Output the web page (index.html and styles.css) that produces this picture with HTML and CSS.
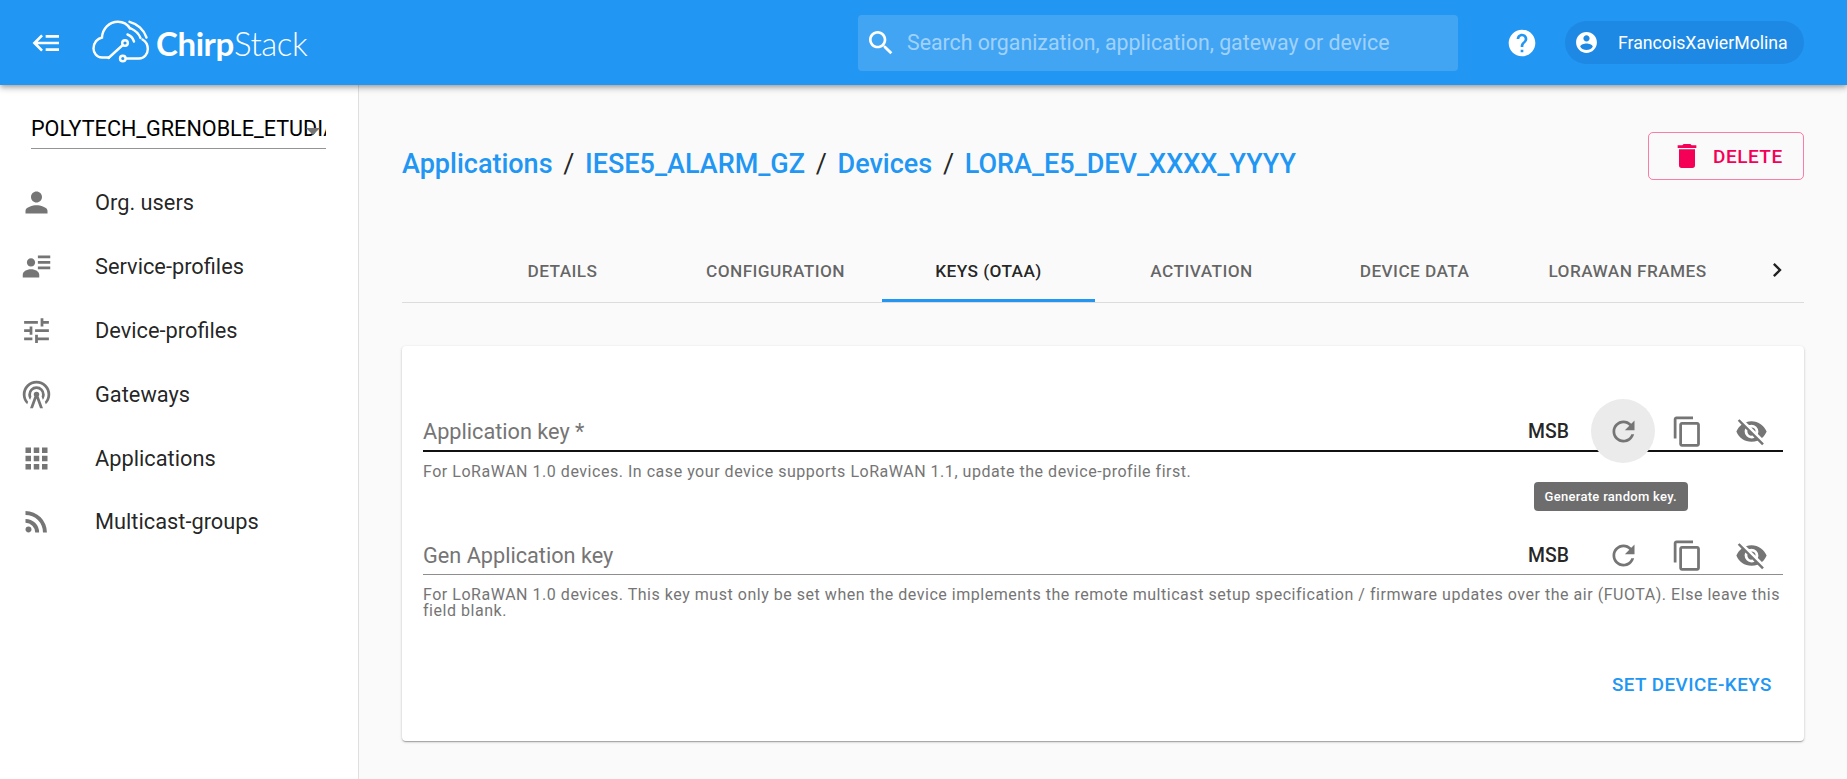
FILE: index.html
```html
<html>
  <head>
    <meta charset="UTF-8" />
    <title>ChirpStack</title>
    <link rel="stylesheet" href="styles.css">
  </head>
  <body>
    <div id="header">
      <svg class="menuIcon" viewBox="0 0 24 24"><path d="M5,13L9,17L7.6,18.42L1.18,12L7.6,5.58L9,7L5,11H21V13H5M21,6V8H11V6H21M21,16V18H11V16H21Z"/></svg>
      <div class="logo">
        <svg class="logoCloud" viewBox="92 17 57 45">
          <path d="M109 54.500H102C96.500 54.500 93.500 49.500 93.500 45.500C93.500 39.500 97.500 35.500 102 34.500C102.500 26 109 18.800 118 18.800C123 18.800 127.500 21.500 130 25.500"/>
          <path d="M126 55.500H139C144.500 55.500 147.800 50.500 147.800 46C147.800 42 146 38.500 142.500 36.500"/>
          <path d="M108.500 55L122.800 42"/>
          <circle cx="125" cy="40" r="2.800"/>
          <circle cx="122.800" cy="55.500" r="2.800"/>
          <path d="M127.500 31.500C130.500 32.500 133 35.500 134 38.500"/>
          <path d="M131 25.500C135.500 27.500 139 31 140.500 35"/>
          <path d="M129.500 18.800C137 20.500 144 27 146.500 34.500"/>
        </svg>
        <span class="logoText"><b>Chirp</b>Stack</span>
      </div>
      <div class="search">
        <svg class="searchIcon" viewBox="0 0 24 24"><path d="M15.5 14h-.79l-.28-.27C15.41 12.59 16 11.11 16 9.5 16 5.91 13.09 3 9.5 3S3 5.91 3 9.5 5.91 16 9.5 16c1.61 0 3.09-.59 4.23-1.57l.27.28v.79l5 4.99L20.49 19l-4.99-5zm-6 0C7.01 14 5 11.99 5 9.5S7.01 5 9.5 5 14 7.01 14 9.5 11.99 14 9.5 14z"/></svg>
        <span>Search organization, application, gateway or device</span>
      </div>
      <svg class="helpIcon" viewBox="0 0 24 24"><path d="M12 2C6.48 2 2 6.48 2 12s4.48 10 10 10 10-4.48 10-10S17.52 2 12 2zm1 17h-2v-2h2v2zm2.070-7.750l-.9.92C13.450 12.900 13 13.500 13 15h-2v-.5c0-1.100.45-2.100 1.170-2.830l1.240-1.260c.37-.36.59-.86.59-1.410 0-1.100-.9-2-2-2s-2 .9-2 2H8c0-2.210 1.790-4 4-4s4 1.790 4 4c0 .88-.36 1.680-.93 2.250z"/></svg>
      <div class="userChip">
        <svg viewBox="0 0 24 24"><path d="M12 2C6.48 2 2 6.48 2 12s4.48 10 10 10 10-4.48 10-10S17.52 2 12 2zm0 3c1.660 0 3 1.340 3 3s-1.340 3-3 3-3-1.340-3-3 1.340-3 3-3zm0 14.200c-2.500 0-4.710-1.280-6-3.220.03-1.990 4-3.080 6-3.080 1.990 0 5.970 1.090 6 3.080-1.290 1.940-3.500 3.220-6 3.220z"/></svg>
        <span>FrancoisXavierMolina</span>
      </div>
    </div>

    <div id="page">
      <div id="sidebar">
        <div class="orgSelect">
          <span class="orgName">POLYTECH_GRENOBLE_ETUDIANTS</span>
          <span class="orgArrow"></span>
        </div>
        <div class="navItem">
          <svg viewBox="0 0 24 24"><path d="M12 12c2.210 0 4-1.790 4-4s-1.790-4-4-4-4 1.790-4 4 1.790 4 4 4zm0 2c-2.670 0-8 1.340-8 4v2h16v-2c0-2.660-5.330-4-8-4z"/></svg>
          <span>Org. users</span>
        </div>
        <div class="navItem">
          <svg viewBox="0 0 24 24"><path d="M11,9C11,10.660 9.660,12 8,12C6.340,12 5,10.660 5,9C5,7.340 6.340,6 8,6C9.660,6 11,7.340 11,9M14,20H2V18C2,15.790 4.690,14 8,14C11.310,14 14,15.790 14,18M22,12V14H13V12M22,8V10H13V8M22,4V6H13V4Z"/></svg>
          <span>Service-profiles</span>
        </div>
        <div class="navItem">
          <svg viewBox="0 0 24 24"><path d="M3 17v2h6v-2H3zM3 5v2h10V5H3zm10 16v-2h8v-2h-8v-2h-2v6h2zM7 9v2H3v2h4v2h2V9H7zm14 4v-2H11v2h10zm-6-4h2V7h4V5h-4V3h-2v6z"/></svg>
          <span>Device-profiles</span>
        </div>
        <div class="navItem">
          <svg viewBox="0 0 24 24"><path d="M12,10A2,2 0 0,1 14,12C14,12.500 13.820,12.940 13.530,13.290L16.700,22H14.570L12,14.930L9.430,22H7.300L10.470,13.290C10.180,12.940 10,12.500 10,12A2,2 0 0,1 12,10M12,8A4,4 0 0,0 8,12C8,12.500 8.100,13 8.280,13.460L7.400,15.860C6.530,14.810 6,13.470 6,12A6,6 0 0,1 12,6A6,6 0 0,1 18,12C18,13.470 17.470,14.810 16.600,15.860L15.720,13.460C15.900,13 16,12.500 16,12A4,4 0 0,0 12,8M12,4A8,8 0 0,0 4,12C4,14 4.730,15.820 5.940,17.220L5.230,19.170C3.250,17.340 2,14.820 2,12A10,10 0 0,1 12,2A10,10 0 0,1 22,12C22,14.820 20.750,17.340 18.770,19.170L18.060,17.220C19.270,15.820 20,14 20,12A8,8 0 0,0 12,4Z"/></svg>
          <span>Gateways</span>
        </div>
        <div class="navItem">
          <svg viewBox="0 0 24 24"><path d="M4 8h4V4H4v4zm6 12h4v-4h-4v4zm-6 0h4v-4H4v4zm0-6h4v-4H4v4zm6 0h4v-4h-4v4zm6-10v4h4V4h-4zm-6 4h4V4h-4v4zm6 6h4v-4h-4v4zm0 6h4v-4h-4v4z"/></svg>
          <span>Applications</span>
        </div>
        <div class="navItem">
          <svg viewBox="0 0 24 24"><path d="M6.180,15.640A2.180,2.180 0 0,1 8.360,17.820C8.360,19 7.380,20 6.180,20C5,20 4,19 4,17.820A2.180,2.180 0 0,1 6.180,15.640M4,4.440A15.560,15.560 0 0,1 19.560,20H16.730A12.730,12.730 0 0,0 4,7.270V4.440M4,10.100A9.900,9.900 0 0,1 13.900,20H11.070A7.070,7.070 0 0,0 4,12.930V10.100Z"/></svg>
          <span>Multicast-groups</span>
        </div>
      </div>

      <div id="main">
        <div class="titleRow">
          <div class="breadcrumb">
            <a>Applications</a><i>/</i><a>IESE5_ALARM_GZ</a><i>/</i><a>Devices</a><i>/</i><a>LORA_E5_DEV_XXXX_YYYY</a>
          </div>
          <div class="deleteBtn">
            <svg viewBox="0 0 24 24"><path d="M19,4H15.500L14.500,3H9.500L8.500,4H5V6H19M6,19A2,2 0 0,0 8,21H16A2,2 0 0,0 18,19V7H6V19Z"/></svg>
            <span>DELETE</span>
          </div>
        </div>

        <div class="tabs">
          <div class="tab">DETAILS</div>
          <div class="tab">CONFIGURATION</div>
          <div class="tab active">KEYS (OTAA)</div>
          <div class="tab">ACTIVATION</div>
          <div class="tab">DEVICE DATA</div>
          <div class="tab">LORAWAN FRAMES</div>
          <div class="tabNext">
            <svg viewBox="0 0 24 24"><path d="M10 6L8.590 7.410 13.170 12l-4.580 4.590L10 18l6-6z"/></svg>
          </div>
        </div>

        <div class="card">
          <div class="field first">
            <div class="inputRow focused">
              <span class="label">Application key *</span>
              <span class="msb">MSB</span>
              <div class="iconBtn hovered">
                <svg viewBox="0 0 24 24"><path d="M17.650 6.350C16.200 4.900 14.210 4 12 4c-4.420 0-7.990 3.580-7.990 8s3.570 8 7.990 8c3.730 0 6.840-2.550 7.730-6h-2.080c-.82 2.330-3.040 4-5.650 4-3.310 0-6-2.690-6-6s2.690-6 6-6c1.660 0 3.140.69 4.220 1.780L13 11h7V4l-2.350 2.350z"/></svg>
              </div>
              <div class="iconBtn">
                <svg viewBox="0 0 24 24"><path d="M16 1H4c-1.100 0-2 .9-2 2v14h2V3h12V1zm3 4H8c-1.100 0-2 .9-2 2v14c0 1.100.9 2 2 2h11c1.100 0 2-.9 2-2V7c0-1.100-.9-2-2-2zm0 16H8V7h11v14z"/></svg>
              </div>
              <div class="iconBtn">
                <svg viewBox="0 0 24 24"><path d="M11.830,9L15,12.160C15,12.110 15,12.050 15,12A3,3 0 0,0 12,9C11.940,9 11.890,9 11.830,9M7.530,9.800L9.080,11.350C9.030,11.560 9,11.770 9,12A3,3 0 0,0 12,15C12.220,15 12.440,14.970 12.650,14.920L14.200,16.470C13.530,16.800 12.790,17 12,17A5,5 0 0,1 7,12C7,11.210 7.200,10.470 7.530,9.800M2,4.270L4.280,6.550L4.730,7C3.080,8.300 1.780,10 1,12C2.730,16.390 7,19.500 12,19.500C13.550,19.500 15.030,19.200 16.380,18.660L16.810,19.080L19.730,22L21,20.730L3.270,3M12,7A5,5 0 0,1 17,12C17,12.640 16.870,13.260 16.640,13.820L19.570,16.750C21.070,15.500 22.270,13.860 23,12C21.270,7.610 17,4.500 12,4.500C10.600,4.500 9.260,4.750 8,5.200L10.170,7.350C10.740,7.130 11.350,7 12,7Z"/></svg>
              </div>
            </div>
            <div class="helper">For LoRaWAN 1.0 devices. In case your device supports LoRaWAN 1.1, update the device-profile first.</div>
            <div class="tooltip">Generate random key.</div>
          </div>

          <div class="field">
            <div class="inputRow">
              <span class="label">Gen Application key</span>
              <span class="msb">MSB</span>
              <div class="iconBtn">
                <svg viewBox="0 0 24 24"><path d="M17.650 6.350C16.200 4.900 14.210 4 12 4c-4.420 0-7.990 3.580-7.990 8s3.570 8 7.990 8c3.730 0 6.840-2.550 7.730-6h-2.080c-.82 2.330-3.040 4-5.650 4-3.310 0-6-2.690-6-6s2.690-6 6-6c1.660 0 3.140.69 4.220 1.780L13 11h7V4l-2.350 2.350z"/></svg>
              </div>
              <div class="iconBtn">
                <svg viewBox="0 0 24 24"><path d="M16 1H4c-1.100 0-2 .9-2 2v14h2V3h12V1zm3 4H8c-1.100 0-2 .9-2 2v14c0 1.100.9 2 2 2h11c1.100 0 2-.9 2-2V7c0-1.100-.9-2-2-2zm0 16H8V7h11v14z"/></svg>
              </div>
              <div class="iconBtn">
                <svg viewBox="0 0 24 24"><path d="M11.830,9L15,12.160C15,12.110 15,12.050 15,12A3,3 0 0,0 12,9C11.940,9 11.890,9 11.830,9M7.530,9.800L9.080,11.350C9.030,11.560 9,11.770 9,12A3,3 0 0,0 12,15C12.220,15 12.440,14.970 12.650,14.920L14.200,16.470C13.530,16.800 12.790,17 12,17A5,5 0 0,1 7,12C7,11.210 7.200,10.470 7.530,9.800M2,4.270L4.280,6.550L4.730,7C3.080,8.300 1.780,10 1,12C2.730,16.390 7,19.500 12,19.500C13.550,19.500 15.030,19.200 16.380,18.660L16.810,19.080L19.730,22L21,20.730L3.270,3M12,7A5,5 0 0,1 17,12C17,12.640 16.870,13.260 16.640,13.820L19.570,16.750C21.070,15.500 22.270,13.860 23,12C21.270,7.610 17,4.500 12,4.500C10.600,4.500 9.260,4.750 8,5.200L10.170,7.350C10.740,7.130 11.350,7 12,7Z"/></svg>
              </div>
            </div>
            <div class="helper">For LoRaWAN 1.0 devices. This key must only be set when the device implements the remote multicast setup specification / firmware updates over the air (FUOTA). Else leave this field blank.</div>
          </div>

          <div class="cardActions">
            <div class="submitBtn">SET DEVICE-KEYS</div>
          </div>
        </div>
      </div>
    </div>
  </body>
</html>
```

FILE: styles.css
```css
body, html {
  margin: 0;
  padding: 0;
  height: 100%;
  overflow: hidden;
  font-family: Roboto, sans-serif;
  background: #fafafa;
}

svg {
  display: block;
  flex: none;
  fill: currentColor;
}

#header {
  position: relative;
  z-index: 2;
  height: 85px;
  background: #2196f3;
  color: #fff;
  display: flex;
  align-items: center;
  box-shadow: 0 2px 4px -1px rgba(0,0,0,.2), 0 4px 5px 0 rgba(0,0,0,.14), 0 1px 10px 0 rgba(0,0,0,.12);
}

.menuIcon {
  width: 32px;
  height: 32px;
  margin-left: 31px;
}

.logo {
  display: flex;
  align-items: center;
  margin-left: 29px;
  width: 766px;
}

.logoCloud {
  width: 57px;
  height: 45px;
  fill: none;
  stroke: #fff;
  stroke-width: 2.4;
  stroke-linecap: round;
}

.logoText {
  margin-left: 7px;
  font-family: Lato, sans-serif;
  font-size: 33px;
  font-weight: 300;
  letter-spacing: -.4px;
}

.logoText b {
  font-weight: 700;
}

.search {
  width: 600px;
  height: 56px;
  background: rgba(255,255,255,.15);
  border-radius: 4px;
  display: flex;
  align-items: center;
  color: rgba(255,255,255,.5);
  font-size: 21.3px;
}

.searchIcon {
  width: 32px;
  height: 32px;
  margin-left: 7px;
  margin-right: 10px;
  color: #fff;
}

.helpIcon {
  width: 32px;
  height: 32px;
  margin-left: 48px;
}

.userChip {
  width: 239px;
  height: 43px;
  margin-left: 27px;
  border-radius: 22px;
  background: #1e88e5;
  display: flex;
  align-items: center;
  font-size: 17.7px;
}

.userChip svg {
  width: 25px;
  height: 25px;
  margin-left: 9px;
  margin-right: 19px;
}

#page {
  display: flex;
  height: 694px;
}

#sidebar {
  width: 358px;
  background: #fff;
  border-right: 1px solid #e0e0e0;
  padding-top: 15px;
  box-sizing: content-box;
}

.orgSelect {
  position: relative;
  width: 295px;
  height: 48px;
  margin-left: 31px;
  margin-bottom: 22px;
  border-bottom: 1px solid #949494;
  overflow: hidden;
}

.orgName {
  display: block;
  line-height: 58px;
  font-size: 21.6px;
  color: #000;
  white-space: nowrap;
}

.orgArrow {
  position: absolute;
  right: 6px;
  top: 28px;
  border-left: 7px solid transparent;
  border-right: 7px solid transparent;
  border-top: 7px solid #757575;
}

.navItem {
  height: 63.8px;
  display: flex;
  align-items: center;
  padding-left: 20px;
  font-size: 21.8px;
  color: rgba(0,0,0,.87);
}

.navItem svg {
  width: 33px;
  height: 33px;
  margin-right: 42px;
  color: #757575;
}

#main {
  flex: 1;
  padding: 0 43px;
}

.titleRow {
  height: 132px;
  padding-top: 47px;
  box-sizing: border-box;
  display: flex;
  justify-content: space-between;
  align-items: flex-start;
}

.breadcrumb {
  padding-top: 16px;
  font-size: 27px;
  font-weight: 500;
  color: #2196f3;
  line-height: 32px;
}

.breadcrumb i {
  font-style: normal;
  font-weight: 400;
  color: rgba(0,0,0,.87);
  margin: 0 10.7px;
}

.deleteBtn {
  width: 156px;
  height: 48px;
  box-sizing: border-box;
  border: 1px solid rgba(245,0,87,.5);
  border-radius: 5px;
  color: #f50057;
  display: flex;
  align-items: center;
  font-size: 19px;
  font-weight: 500;
  letter-spacing: .5px;
}

.deleteBtn svg {
  width: 32px;
  height: 32px;
  margin-left: 22px;
  margin-right: 10px;
}

.tabs {
  height: 86px;
  margin-bottom: 43px;
  padding-left: 54px;
  box-sizing: border-box;
  display: flex;
  border-bottom: 1px solid #dcdcdc;
}

.tab {
  width: 213px;
  flex: none;
  height: 85px;
  box-sizing: border-box;
  padding-bottom: 6px;
  display: flex;
  align-items: flex-end;
  justify-content: center;
  line-height: 50px;
  font-size: 17.3px;
  font-weight: 500;
  letter-spacing: .4px;
  color: rgba(0,0,0,.6);
  white-space: nowrap;
}

.tab.active {
  color: rgba(0,0,0,.87);
  border-bottom: 3px solid #2196f3;
  padding-bottom: 3px;
}

.tabNext {
  flex: 1;
  display: flex;
  align-items: flex-end;
  justify-content: center;
  padding-bottom: 18px;
  padding-left: 16px;
  color: rgba(0,0,0,.87);
}

.tabNext svg {
  width: 28px;
  height: 28px;
}

.card {
  height: 395px;
  box-sizing: border-box;
  background: #fff;
  border-radius: 4px;
  padding: 0 21px;
  box-shadow: 0 1px 3px 0 rgba(0,0,0,.2), 0 1px 1px 0 rgba(0,0,0,.14), 0 2px 1px -1px rgba(0,0,0,.12);
}

.field {
  position: relative;
  padding-top: 51px;
}

.field.first {
  padding-top: 61px;
}

.inputRow {
  display: flex;
  align-items: center;
  height: 38px;
  padding-top: 5px;
  border-bottom: 1px solid #8e8e8e;
  color: #757575;
}

.inputRow.focused {
  border-bottom: 2px solid #111;
}

.label {
  flex: 1;
  font-size: 21.7px;
  color: #757575;
}

.msb {
  font-size: 19.4px;
  font-weight: 500;
  color: rgba(0,0,0,.87);
  margin-right: 22px;
}

.iconBtn {
  width: 64px;
  height: 64px;
  border-radius: 50%;
  display: flex;
  align-items: center;
  justify-content: center;
  flex: none;
}

.iconBtn svg {
  width: 33px;
  height: 33px;
}

.iconBtn.hovered {
  background: #ebebeb;
}

.helper {
  margin-top: 12px;
  font-size: 16px;
  line-height: 16px;
  letter-spacing: .53px;
  color: #757575;
}

.tooltip {
  position: absolute;
  right: 95px;
  top: 136px;
  height: 29px;
  padding: 0 11px;
  background: #6d6d6d;
  border-radius: 4px;
  color: #fff;
  font-size: 13px;
  font-weight: 500;
  line-height: 29px;
  letter-spacing: .3px;
}

.cardActions {
  display: flex;
  justify-content: flex-end;
  padding: 55px 11px 0 0;
}

.submitBtn {
  font-size: 18.8px;
  font-weight: 500;
  letter-spacing: .5px;
  color: #2196f3;
}
```
